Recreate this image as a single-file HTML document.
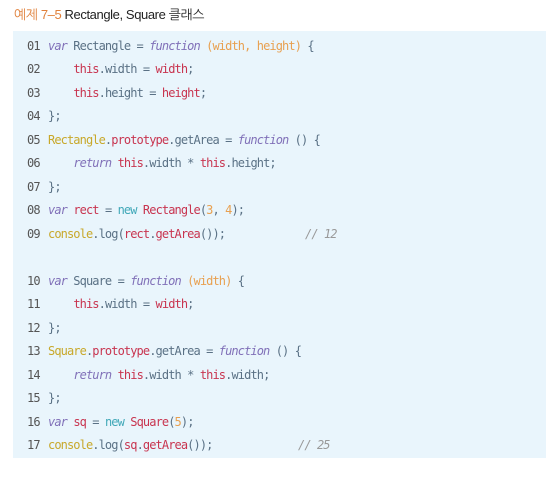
<!DOCTYPE html>
<html><head><meta charset="utf-8"><style>
body{margin:0;width:556px;height:480px;background:#fff;position:relative;overflow:hidden}
.t{position:absolute;left:14px;top:7px;font:13px "Liberation Sans","NanumGothic","Noto Sans CJK KR",sans-serif;color:#222;letter-spacing:-0.4px}
.t b{font-weight:normal;color:#e0803a}
.box{position:absolute;left:13px;top:31px;width:533px;height:427px;background:#e9f5fc}
.l{position:absolute;left:27px;height:20px;line-height:20px;font:12px "DejaVu Sans Mono",monospace;letter-spacing:-0.9px;white-space:pre;color:#5a7185}
.n{display:inline-block;width:21px;color:#555}
.k{color:#8070b8;font-style:italic}
.f{color:#8070b8;font-style:italic}
.p{color:#e8a050}
.r{color:#c8344f}
.y{color:#c8a82a}
.c{color:#999;font-style:italic;position:absolute}
.nw{color:#40a8b8}
</style></head><body>
<div class="t"><b>예제 7–5</b> Rectangle, Square 클래스</div>
<div class="box"></div>
<div class="l" style="top:39px"><span class="n">01</span><span class="k">var</span> Rectangle = <span class="f">function</span> <span class="p">(width, height)</span> {</div>
<div class="l" style="top:62px"><span class="n">02</span>    <span class="r">this</span>.width = <span class="r">width</span>;</div>
<div class="l" style="top:86px"><span class="n">03</span>    <span class="r">this</span>.height = <span class="r">height</span>;</div>
<div class="l" style="top:109px"><span class="n">04</span>};</div>
<div class="l" style="top:133px"><span class="n">05</span><span class="y">Rectangle</span>.<span class="r">prototype</span>.getArea = <span class="f">function</span> () {</div>
<div class="l" style="top:156px"><span class="n">06</span>    <span class="k">return</span> <span class="r">this</span>.width * <span class="r">this</span>.height;</div>
<div class="l" style="top:180px"><span class="n">07</span>};</div>
<div class="l" style="top:203px"><span class="n">08</span><span class="k">var</span> <span class="r">rect</span> = <span class="nw">new</span> <span class="r">Rectangle</span>(<span class="p">3</span>, <span class="p">4</span>);</div>
<div class="l" style="top:227px"><span class="n">09</span><span class="y">console</span>.log(<span class="r">rect</span>.<span class="r">getArea</span>());<span class="c" style="left:278px">// 12</span></div>
<div class="l" style="top:274px"><span class="n">10</span><span class="k">var</span> Square = <span class="f">function</span> <span class="p">(width)</span> {</div>
<div class="l" style="top:297px"><span class="n">11</span>    <span class="r">this</span>.width = <span class="r">width</span>;</div>
<div class="l" style="top:321px"><span class="n">12</span>};</div>
<div class="l" style="top:344px"><span class="n">13</span><span class="y">Square</span>.<span class="r">prototype</span>.getArea = <span class="f">function</span> () {</div>
<div class="l" style="top:368px"><span class="n">14</span>    <span class="k">return</span> <span class="r">this</span>.width * <span class="r">this</span>.width;</div>
<div class="l" style="top:391px"><span class="n">15</span>};</div>
<div class="l" style="top:415px"><span class="n">16</span><span class="k">var</span> <span class="r">sq</span> = <span class="nw">new</span> <span class="r">Square</span>(<span class="p">5</span>);</div>
<div class="l" style="top:438px"><span class="n">17</span><span class="y">console</span>.log(<span class="r">sq</span>.<span class="r">getArea</span>());<span class="c" style="left:271px">// 25</span></div>
</body></html>
